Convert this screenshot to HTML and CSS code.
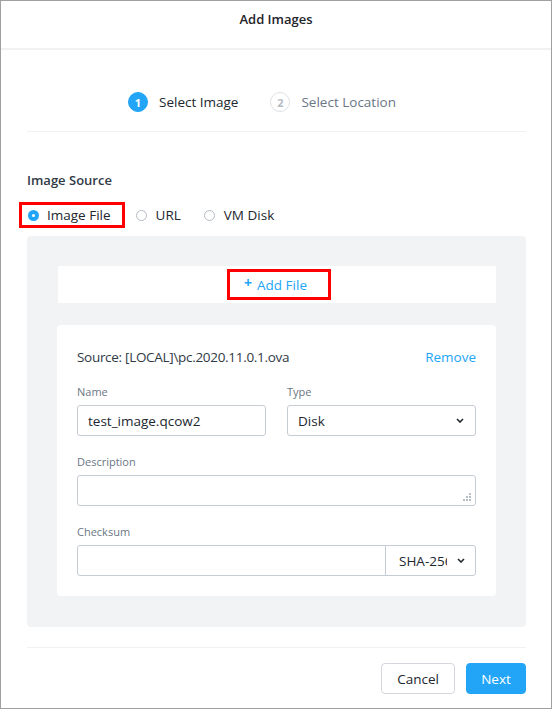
FILE: index.html
```html
<!DOCTYPE html>
<html>
<head>
<meta charset="utf-8">
<link rel="stylesheet" href="styles.css">
</head>
<body>
<div class="dialog">
  <div class="header">Add Images</div>
  <div class="content">
    <div class="stepper">
      <div class="step active"><span class="num">1</span><span class="step-label">Select Image</span></div>
      <div class="step"><span class="num">2</span><span class="step-label">Select Location</span></div>
    </div>

    <div class="section-title">Image Source</div>
    <div class="radios">
      <label class="radio highlight"><span class="dot on"></span>Image File</label>
      <label class="radio"><span class="dot"></span>URL</label>
      <label class="radio"><span class="dot"></span>VM Disk</label>
    </div>

    <div class="panel">
      <div class="addbar"><span class="addfile"><span class="plus">+</span>Add File</span></div>
      <div class="card">
        <div class="source-row">
          <span class="source">Source: [LOCAL]\pc.2020.11.0.1.ova</span>
          <span class="link">Remove</span>
        </div>
        <div class="grid2">
          <div class="field">
            <div class="label">Name</div>
            <div class="input">test_image.qcow2</div>
          </div>
          <div class="field">
            <div class="label">Type</div>
            <div class="input select">Disk
              <svg class="chev" width="8" height="5" viewBox="0 0 8 5"><path d="M1 1 L4 4 L7 1" fill="none" stroke="#22272e" stroke-width="1.6"/></svg>
            </div>
          </div>
        </div>
        <div class="field">
          <div class="label">Description</div>
          <div class="input textarea">
            <svg class="grip" width="10" height="10" viewBox="0 0 10 10" fill="#b8bec8"><rect x="7" y="1" width="2" height="2"/><rect x="4" y="4" width="2" height="2"/><rect x="7" y="4" width="2" height="2"/><rect x="1" y="7" width="2" height="2"/><rect x="4" y="7" width="2" height="2"/><rect x="7" y="7" width="2" height="2"/></svg>
          </div>
        </div>
        <div class="field">
          <div class="label">Checksum</div>
          <div class="group">
            <div class="group-input"></div>
            <div class="group-select"><span class="clip">SHA-256</span>
              <svg class="chev2" width="8" height="5" viewBox="0 0 8 5"><path d="M1 1 L4 4 L7 1" fill="none" stroke="#22272e" stroke-width="1.6"/></svg>
            </div>
          </div>
        </div>
      </div>
    </div>

    <div class="footer">
      <button class="btn cancel">Cancel</button>
      <button class="btn next">Next</button>
    </div>
  </div>
</div>
</body>
</html>
```
FILE: styles.css
```css
* { box-sizing: border-box; }
html, body { margin: 0; padding: 0; background: #fff; }
body {
  font-family: "Open Sans", Lato, "Liberation Sans", sans-serif;
  color: #22272e;
  font-size: 13.5px;
}
.dialog {
  width: 552px;
  height: 709px;
  border: 1px solid #a0a0a0;
  background: #fff;
}
.header {
  height: 49px;
  border-bottom: 2px solid #f0f1f3;
  text-align: center;
  font-weight: 600;
  font-size: 13px;
  line-height: 16px;
  padding-top: 10px;
  color: #1f242b;
}
.content {
  padding: 0 25px 0 26px;
}
.stepper {
  display: flex;
  justify-content: flex-start;
  gap: 32px;
  padding: 42px 0 19px 101px;
  border-bottom: 1px solid #f0f1f3;
}
.step {
  display: flex;
  align-items: center;
  height: 20px;
}
.num {
  width: 20px;
  height: 20px;
  border-radius: 50%;
  border: 1.5px solid #dde0e5;
  color: #b5bcc6;
  font-size: 11px;
  font-weight: 700;
  display: flex;
  align-items: center;
  justify-content: center;
  margin-right: 11px;
}
.step.active .num {
  background: #22a5f7;
  border-color: #22a5f7;
  color: #fff;
}
.step-label { font-size: 13.5px; color: #6b7785; }
.step.active .step-label { color: #22272e; }
.section-title {
  margin-top: 40px;
  font-size: 13px;
  line-height: 16px;
  font-weight: 600;
  color: #313a46;
}
.radios {
  display: flex;
  align-items: center;
  margin-top: 14px;
  margin-left: -8px;
}
.radio {
  display: flex;
  align-items: center;
  height: 20px;
  color: #22272e;
  margin-right: 23px;
}
.radio.highlight {
  height: 26px;
  border: 3px solid #ff0000;
  padding: 0 11px 0 6px;
  margin-right: 11px;
}
.dot {
  width: 11px;
  height: 11px;
  border-radius: 50%;
  border: 1px solid #b5bcc6;
  margin-right: 9px;
  background: #fff;
}
.dot.on {
  border: 4px solid #22a5f7;
  background: #fff;
  margin-right: 8px;
}
.panel {
  margin-top: 8px;
  background: #f2f3f5;
  border-radius: 4px;
  padding: 30px 30px 31px 30px;
}
.addbar {
  background: #fff;
  height: 37px;
  display: flex;
  align-items: center;
  justify-content: center;
  margin-left: 1px;
}
.addfile {
  display: flex;
  align-items: center;
  height: 31px;
  border: 3px solid #ff0000;
  padding: 0 21px 0 14px;
  color: #22a5f7;
  margin-left: 4px;
}
.plus { font-weight: 700; font-size: 14px; margin-right: 5px; position: relative; top: -2px; }
.card {
  margin-top: 22px;
  background: #fff;
  border-radius: 4px;
  padding: 24px 20px 20px 20px;
}
.source-row {
  display: flex;
  justify-content: space-between;
  line-height: 16px;
  color: #313a46;
}
.source { letter-spacing: -0.3px; }
.link { color: #22a5f7; }
.grid2 {
  display: grid;
  grid-template-columns: 1fr 1fr;
  gap: 21px;
  margin-top: 20px;
}
.field { margin-bottom: 19px; }
.grid2 .field { margin-bottom: 0; }
.grid2 + .field { margin-top: 19px; }
.field:last-child { margin-bottom: 0; }
.label {
  font-size: 11px;
  line-height: 14px;
  color: #6b7785;
  margin-bottom: 6px;
}
.input {
  height: 31px;
  border: 1px solid #c6ccd6;
  border-radius: 3px;
  display: flex;
  align-items: center;
  padding: 0 10px;
  color: #22272e;
  position: relative;
}
.select { justify-content: space-between; }
.chev { margin-right: 1px; }
.textarea .grip {
  position: absolute;
  right: 3px;
  bottom: 3px;
}
.group {
  display: flex;
  height: 31px;
  border: 1px solid #c6ccd6;
  border-radius: 3px;
}
.group-input { flex: 1; }
.group-select {
  width: 90px;
  border-left: 1px solid #c6ccd6;
  display: flex;
  align-items: center;
  padding: 0 10px 0 13px;
  justify-content: space-between;
}
.clip {
  width: 48px;
  overflow: hidden;
  white-space: nowrap;
}
.footer {
  margin-top: 20px;
  border-top: 1px solid #f0f1f3;
  padding-top: 15px;
  display: flex;
  justify-content: flex-end;
  gap: 11px;
}
.btn {
  height: 31px;
  border-radius: 4px;
  font-family: "Open Sans", Lato, "Liberation Sans", sans-serif;
  font-size: 13.5px;
  padding: 0;
}
.cancel {
  width: 74px;
  background: #fff;
  border: 1px solid #d3d7dd;
  color: #22272e;
}
.next {
  width: 60px;
  background: #22a5f7;
  border: 1px solid #22a5f7;
  color: #fff;
}
```
